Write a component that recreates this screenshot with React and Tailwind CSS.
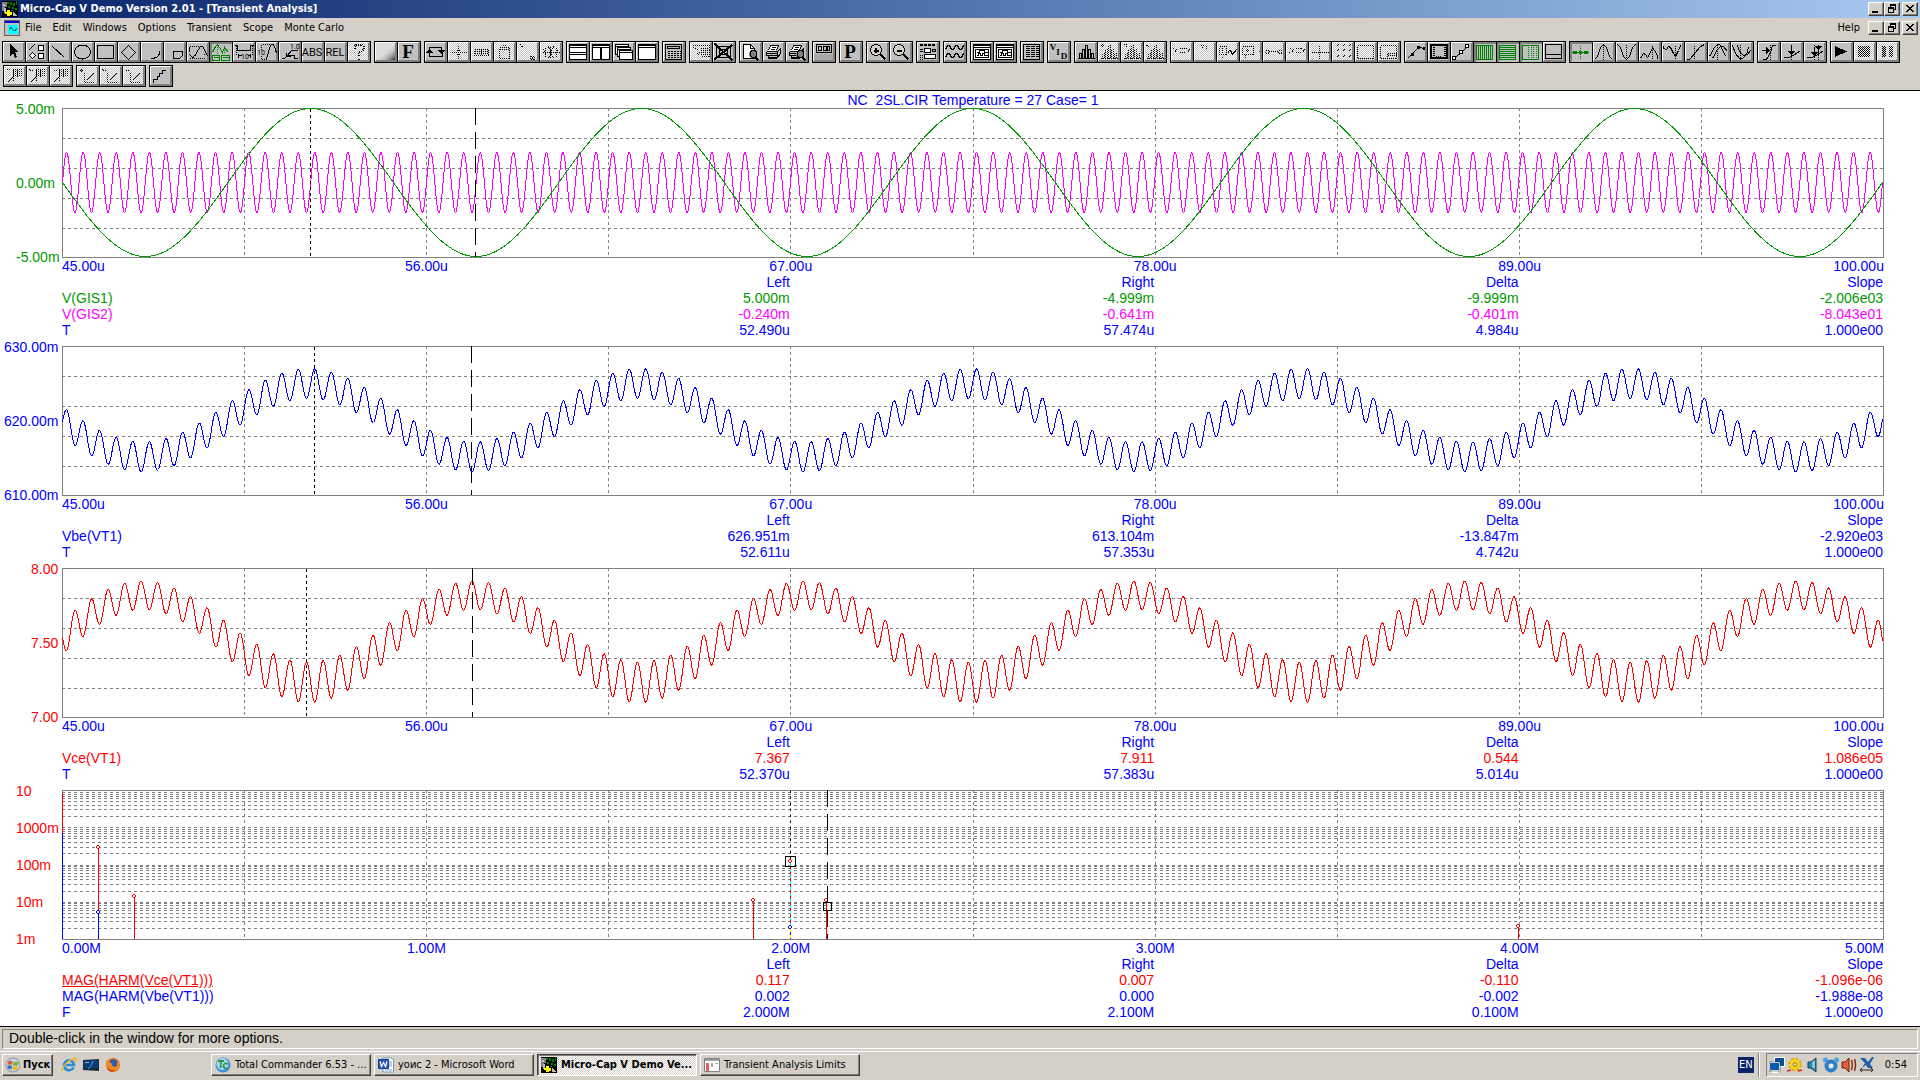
import React from "react";

/* ---------- toolbar glyph helpers (22 x 20 button face) ---------- */
const L = (d, o = {}) => (
  <path d={d} fill="none" stroke="#000" strokeWidth="1" transform="translate(.5 .5)" {...o} />
);
const F = (d, o = {}) => <path d={d} fill="#000" {...o} />;
const T = (x, y, size, s, o = {}) => (
  <text x={x} y={y} fontSize={size} fontFamily="'Liberation Sans Narrow', Roboto, sans-serif" {...o}>{s}</text>
);
const serif = { fontFamily: "'Liberation Serif', serif", fontWeight: 700, textAnchor: "middle" };
const DOT = { strokeDasharray: "1 1" };
const G = { stroke: "#008000" };
const GD = { stroke: "#008000", strokeDasharray: "1 1" };
const W = { fill: "#fff" };

const hist = (o) => L("M2 16H19M4 16V11H6V16M7 16V7H9V16M10 16V3H12V16M13 16V7H15V16M16 16V11H18V16", o);
const win = (
  <>
    {F("M2 2H20V18H2Z", W)}
    {L("M2 2H19V17H2ZM2 5H19M2 3H19")}
  </>
);
const scope = (
  <>
    {F("M2 2H20V18H2Z", W)}
    {L("M2 2H19V17H2ZM2 5H19M2 3H19M4 7H17V15H4ZM5 10H8V8H13V10H16M5 13H7V11H9V13H11V11H13V13H16")}
  </>
);
const lens = (x, y) => (
  <>
    {F(`M${x} ${y}h4l2 2v4l-2 2h-4l-2-2v-4Z`, { fill: "#808080" })}
    {L(`M${x} ${y}h4l1 2v3l-1 2h-4l-1-2v-3Z`)}
    {L(`M${x + 4} ${y + 7}l3 3`, { strokeWidth: 2 })}
  </>
);
const printer = (
  <>
    {F("M7 3H15L13 9H5Z", W)}
    {L("M7 3H15L13 8M7 3L5 8M8 5H12M7 7H11M3 9H14L17 6M3 9V13H14V9M17 6V11L14 15M3 11H14M5 13V16H13L15 13M5 15H13")}
  </>
);
const dither = (x0, x1, y0, y1) => {
  let d = "";
  for (let y = y0; y <= y1; y++) for (let x = x0 + (y % 2); x <= x1; x += 2) d += `M${x} ${y}h1v1h-1Z`;
  return d;
};

const ICONS = {
  arrow: F("M7 2V14L10 11L12 16L14 15L12 10H15Z"),
  shapes: (
    <>
      {L("M2 8L8 2")}
      {F("M3 13L6 10L9 13L6 16Z", W)}
      {L("M3 13L6 10L9 13L6 16Z")}
      {F("M12 3H18V9H12Z", W)}
      {L("M12 3H17V8H12Z")}
      <circle cx="15" cy="14" r="3" fill="#fff" stroke="#000" />
    </>
  ),
  line: L("M3 4L15 15"),
  ellipse: <ellipse cx="10.5" cy="10" rx="8" ry="7" fill="none" stroke="#000" />,
  rect: L("M2 3H18V16H2Z"),
  diamond: L("M10 3L17 10L10 17L3 10Z"),
  arc: L("M18 8V11Q17 16 9 16"),
  pie: L("M9 9H18V12Q17 16 13 16H9Z"),
  wavebox: (
    <>
      {L("M2 4H14M2 16H18M16 12H20", DOT)}
      {L("M2 4V9M2 12L5 15L7 14L11 7L13 4H15L18 9L20 14")}
    </>
  ),
  peaks: (
    <>
      {L("M2 10L5 4L7 2L9 5L12 10L14 5L18 10", G)}
      {L("M7 2V11M14 3V11", GD)}
      {L("M2 13H9V18H2ZM11 13H19V18H11ZM3 15H8M12 15H18", G)}
    </>
  ),
  span: (
    <>
      {L("M3 3V12M19 3V12", DOT)}
      {L("M1 3H4V8H17V3H20M5 11V15M17 11V15M5 13H8M14 13H17")}
      {T(8, 17, 7, "10")}
    </>
  ),
  vspan: (
    <>
      {L("M6 2H16M5 17H11M5 2V7M5 13V17", DOT)}
      {L("M9 17L11 14L13 5L15 2H17L19 7L20 11")}
      {T(1, 13, 7, "10")}
    </>
  ),
  tag: (
    <>
      {T(11, 7, 7, "1.0")}
      {L("M12 8H18M12 8L8 13M2 16H5L8 13H15V16H18M7 10V14H11")}
    </>
  ),
  abs: T(10, 14, 11, "ABS", { textAnchor: "middle" }),
  rel: T(10, 14, 11, "REL", { textAnchor: "middle" }),
  help: L("M6 6V4L8 2H13L15 4V7L10 11V13M10 16V17", { strokeDasharray: "1 1", strokeWidth: 2 }),
  shade: (
    <>
      <defs>
        <linearGradient id="shade" x1="0" y1="0" x2="1" y2="1">
          <stop offset=".4" stopColor="#fff" stopOpacity="0" />
          <stop offset="1" stopColor="#333" />
        </linearGradient>
      </defs>
      {F("M1 1H20V18H1Z", { fill: "#dcdcdc" })}
      {F("M1 1H20V18H1Z", { fill: "url(#shade)" })}
    </>
  ),
  bigF: T(10, 16, 19, "F", serif),
  bigP: T(10, 16, 19, "P", serif),
  swap: (
    <>
      {L("M4 9V5H16V9M4 10V14H17V10")}
      {F("M13 8H20L16.5 12ZM1 11H8L4.5 7Z")}
    </>
  ),
  cross: L("M3 10H18M10 3V17M8 8H12M8 12H12", DOT),
  chip: L("M3 7H17V13H3ZM3 9H17M3 11H17M10 7V13", DOT),
  can: L("M5 5H15V16H5ZM5 7H15M8 3H12", DOT),
  nodes: L("M3 2L5 5M5 3V5M13 14H17V17H13ZM13 14L17 17", DOT),
  burst: L("M2 10H19M5 5V15M8 4L13 16M13 4L8 16M16 5V15M10 4V16M3 7L6 12M15 12L18 7", DOT),
  tileH: <>{win}{L("M2 10H19M2 12H19")}</>,
  tileV: <>{win}{L("M10 5V17M11 5V17")}</>,
  cascade: (
    <>
      {F("M2 2H15V11H2Z", W)}{L("M2 2H15V12H2ZM2 4H15")}
      {F("M4 5H17V14H4Z", W)}{L("M4 5H17V14H4ZM4 7H17")}
      {F("M6 8H20V17H6Z", W)}{L("M6 8H19V17H6ZM6 10H19")}
    </>
  ),
  full: win,
  calc: (
    <>
      {L("M2 2H18V17H2ZM4 4H16V6H4Z")}
      {L("M4 9H17M4 11H17M4 13H17M4 15H17", { strokeDasharray: "2 1" })}
    </>
  ),
  copy: L("M2 3H8M3 5L8 8M6 3H19V8H10M8 10H19V14H10L5 9M10 6H18M10 12H18", DOT),
  nobox: (
    <>
      {L("M3 4H17V15H3ZM6 7H14V12H6Z")}
      {L("M1 1L19 18M19 2L1 17", { strokeWidth: 2 })}
    </>
  ),
  preview: (
    <>
      {F("M3 2H10L15 6V17H3Z", W)}
      {L("M3 2H10L14 6V16H3ZM10 2V6H14")}
      {lens(11, 8)}
    </>
  ),
  printer,
  printview: <>{printer}{lens(12, 8)}</>,
  panel: (
    <>
      {L("M3 2H18V10H3Z")}
      {L("M5 4H8V8H5ZM10 4H13V8H10ZM14 4H16V8H14Z")}
      {F("M1 12H20V18H1Z", { fill: "#a8a8a8" })}
    </>
  ),
  zin: (
    <>
      <circle cx="9" cy="8" r="5.5" fill="#d4d0c8" stroke="#000" />
      {L("M6 8H11M8 5V10", { strokeWidth: 2 })}
      {L("M13 12L18 17", { strokeWidth: 2 })}
    </>
  ),
  zout: (
    <>
      <circle cx="9" cy="8" r="5.5" fill="#d4d0c8" stroke="#000" />
      {L("M6 8H11", { strokeWidth: 2 })}
      {L("M13 12L18 17", { strokeWidth: 2 })}
    </>
  ),
  props: (
    <>
      {L("M2 2H18M2 3H18", { strokeDasharray: "3 1" })}
      {L("M2 7H5M2 9H5M15 7H18V9H15Z")}
      {L("M2 13H5M2 15H5M2 17H5", DOT)}
      {F("M7 6H14V11H7ZM7 12H19V17H7Z", W)}
      {L("M7 6H13V10H7ZM7 12H18V16H7Z")}
    </>
  ),
  waves: L("M1 7L3 3H5L7 7H9L11 3H13L15 7H17L19 3M1 15L3 11H5L7 15H9L11 11H13L15 15H17L19 11"),
  scope,
  sheet: (
    <>
      {L("M2 2H18V17H2Z")}
      {L("M4 4H17M4 6H17M4 8H17M4 10H17M4 12H17M4 14H17", { strokeDasharray: "4 1" })}
    </>
  ),
  vid: (
    <>
      {T(5, 8, 9, "V", serif)}
      {T(10, 13, 9, "I", serif)}
      {T(16, 17, 9, "D", serif)}
    </>
  ),
  hist: hist({}),
  hist1: <>{hist(DOT)}{L("M2 3H6M4 1V5", DOT)}</>,
  hist2: <>{hist(DOT)}{L("M2 2H5V5", DOT)}</>,
  hist3: <>{hist(DOT)}{L("M2 3L6 5", DOT)}</>,
  lab: L("M2 6L4 8L6 6M4 8V10M8 6H13M8 10H13M15 6L17 8L19 6M17 8V10", DOT),
  pair: L("M7 3L9 6M9 3L7 6M12 3V6", DOT),
  boxwave: <>{L("M2 4H9V12H2ZM5 5V10M5 14V16", DOT)}{L("M10 11L12 8H13L15 12L19 7")}</>,
  boxpt: L("M2 4H13V12H2ZM7 6V10M5 8H9M5 12V16M19 8V9", DOT),
  ends: L("M2 8H5V11H2ZM15 8H18V11H15ZM5 9H15", DOT),
  lab2: L("M2 10H3M4 6L6 8L8 6M6 8V10M9 6H14M9 10H14M15 6L17 8L19 6M17 8V10", DOT),
  plus: L("M2 10H19M10 3V17", DOT),
  rain: L("M3 5L6 2M9 5L12 2M15 5L18 2M3 10L6 7M9 10L12 7M15 10L18 7M3 16L6 13M9 16L12 13M15 16L18 13", DOT),
  frame: L("M2 3H18V16H2Z", DOT),
  frame2: L("M2 3H18V16H2ZM9 11H18M9 13H18M9 11V16", DOT),
  curve: <>{L("M2 16L9 9L13 5H16L19 7")}{F("M6 11H9V14H6ZM12 4H15V7H12ZM18 5H20V8H18Z")}</>,
  ruler: (
    <>
      {F("M2 2H20V4H2ZM2 2H4V17H2ZM2 15H20V17H2ZM18 2H20V17H18Z")}
      {L("M4 5H6M4 7H6M4 9H6M4 11H6M4 13H6M15 5H17M15 7H17M15 9H17M15 11H17M15 13H17M8 13V14M10 13V14M12 13V14")}
    </>
  ),
  points: <>{L("M3 16L16 4")}{F("M1 14H5V18H1ZM8 8H12V12H8ZM14 2H18V6H14Z")}{F("M2 15H4V17H2ZM9 9H11V11H9ZM15 3H17V5H15Z", W)}</>,
  vbars: L("M2 3H18V17H2ZM4 3V17M6 3V17M8 3V17M10 3V17M12 3V17M14 3V17M16 3V17", G),
  hbars: L("M2 3H18V17H2ZM2 5H18M2 7H18M2 9H18M2 11H18M2 13H18M2 15H18", G),
  dbars: <>{L("M2 3H18V17H2Z", G)}{L("M8 4V16M11 4V16M13 4V16M16 4V16", GD)}</>,
  pane: L("M2 2H18V16H2ZM2 12H18"),
  track: <>{L("M10 3V17", GD)}{F("M3 9H7V12H3ZM9 9H12V12H9ZM14 9H18V12H14ZM2 10H19V11H2Z", { fill: "#008000" })}</>,
  peak: <>{L("M1 17L4 14L7 5L10 2L13 5L16 14L19 17")}{L("M10 2V17", DOT)}</>,
  valley: <>{L("M1 2L4 5L7 14L10 17L13 14L16 5L19 2")}{L("M10 2V17", DOT)}</>,
  high: <>{L("M1 16L4 11L6 12L8 15L10 12L13 5L15 8L18 13V16")}{L("M13 3V17", DOT)}</>,
  low: <>{L("M1 3V6L4 7L6 4L8 5L11 11L13 14L16 8L18 3")}{L("M13 3V17", DOT)}</>,
  inflect: <>{L("M1 17H4L15 4L19 2")}{L("M9 3V17", DOT)}</>,
  gmax: <>{L("M1 14L6 5L9 2H11L14 7L17 14M4 16L9 7L12 4H15L19 9")}{L("M9 2V17", DOT)}</>,
  gmin: <>{L("M1 3L4 11L8 16H11L15 12L17 5M6 3L8 9L12 13L16 12L19 8")}{L("M9 2V17", DOT)}</>,
  goX: <>{L("M4 17H8L12 10L14 3H17M3 8H9")}{F("M8 5L12 8.5L8 12Z")}{L("M12 2V17", DOT)}</>,
  goY: <>{L("M2 15H7L12 13L19 8M10 2V10")}{F("M7 9H14L10.5 13Z")}{L("M10 2V17", DOT)}</>,
  goXY: <>{L("M2 15H7L12 13L19 8M14 2V10M10 4V12")}{F("M11 4H18L14.5 8ZM7 10H14L10.5 14Z")}{L("M10 2V17M14 2V17", DOT)}</>,
  play: F("M4 4L16 9.5L4 15Z"),
  stop: F(dither(4, 15, 4, 14)),
  pause: F(dither(5, 8, 4, 14) + dither(12, 15, 4, 14)),
  net1: <>{L("M2 3H5M8 3H17M8 5H17M8 7H17M8 9H17M9 3V14M13 3V10", DOT)}{L("M3 16L8 11")}</>,
  net2: <>{L("M2 2V4H5M8 3H17M8 5H17M8 7H17M8 9H17M9 3V14M13 3V10", DOT)}{L("M3 16L8 11")}</>,
  net3: <>{L("M3 4H6M8 3H17M8 5H17M8 7H17M8 9H17M9 3V14M13 3V10", DOT)}{L("M3 16L8 11")}</>,
  ax1: <>{L("M2 4H6M4 2V6M7 6V16H17", DOT)}{L("M9 14L16 7")}</>,
  ax2: <>{L("M2 2V4H5M7 6V16H17", DOT)}{L("M9 14L16 7")}</>,
  ax3: <>{L("M2 4H6M7 6V16H17", DOT)}{L("M9 14L16 7")}</>,
  stairs: L("M3 16V13H7V10H9V7H12V4H15"),
};

/* "-" = unavailable, "+" = pressed */
const ROW1 = [
  "arrow shapes line ellipse rect diamond arc pie wavebox +peaks span vspan tag abs rel -help",
  "shade bigF",
  "swap -cross -chip -can -nodes -burst",
  "tileH tileV cascade full",
  "calc",
  "-copy nobox",
  "preview printer printview",
  "panel",
  "bigP",
  "zin zout",
  "props",
  "waves",
  "scope scope",
  "sheet",
  "vid",
  "hist -hist1 -hist2 -hist3",
  "-lab -pair -boxwave -boxpt -ends -lab2 -plus -rain -frame -frame2",
  "curve ruler points +vbars +hbars +dbars pane",
  "+track peak valley high low inflect gmax gmin",
  "goX goY goXY",
  "play -stop -pause",
];
const ROW2 = ["-net1 -net2 -net3", "-ax1 -ax2 -ax3", "stairs"];

function ToolButton({ code }) {
  const off = code[0] === "-";
  const on = code[0] === "+";
  const name = code.replace(/^[-+]/, "");
  let look = "bg-[#c0c0c0] border-t-white border-l-white border-b-[#808080] border-r-[#808080] border-t border-l border-b-2 border-r-2";
  if (off) look = "bg-[conic-gradient(#fff_25%,#c0c0c0_0_50%,#fff_0_75%,#c0c0c0_0)] bg-[length:2px_2px] border-t-white border-l-white border-b-[#808080] border-r-[#808080] border-t border-l border-b-2 border-r-2";
  if (on) look = "bg-[#c0c0c0] border-t-[#808080] border-l-[#808080] border-t-2 border-l-2";
  return (
    <button type="button" aria-label={name} disabled={off} aria-pressed={on} className="border-r border-black">
      <span className={"relative block h-5 w-[22px] " + look}>
        <svg
          width="22"
          height="20"
          viewBox="0 0 22 20"
          shapeRendering="crispEdges"
          className={on ? "absolute -top-0.5 -left-0.5" : "absolute -top-px -left-px"}
        >
          {ICONS[name]}
        </svg>
      </span>
    </button>
  );
}

function ToolRow({ groups, className }) {
  return (
    <div className={"flex gap-[3px] " + className}>
      {groups.map((g, i) => (
        <div key={i} className="flex shrink-0 border-y border-l border-black">
          {g.split(" ").map((c, j) => (
            <ToolButton key={j} code={c} />
          ))}
        </div>
      ))}
    </div>
  );
}

/* ---------- window furniture ---------- */
const RAISED = "border border-t-white border-l-white border-b-[#404040] border-r-[#404040] shadow-[inset_-1px_-1px_0_#808080] bg-[#d4d0c8]";

function WinButtons() {
  const b = "flex h-3.5 w-4 items-center justify-center " + RAISED;
  return (
    <div className="flex pr-0.5">
      <button type="button" aria-label="Minimize" className={b}>
        <svg width="12" height="10" shapeRendering="crispEdges"><path d="M2 7H8V9H2Z" /></svg>
      </button>
      <button type="button" aria-label="Restore" className={b}>
        <svg width="12" height="10" shapeRendering="crispEdges">
          <path d="M4 0H10V6H8V5H9V2H5V3H4ZM2 3H8V9H2ZM3 5V8H7V5Z" fillRule="evenodd" />
        </svg>
      </button>
      <button type="button" aria-label="Close" className={"ml-0.5 " + b}>
        <svg width="12" height="10" shapeRendering="crispEdges">
          <path d="M2 1H4V2H5V3H7V2H8V1H10V2H9V3H8V4H7V5H8V6H9V7H10V8H8V7H7V6H5V7H4V8H2V7H3V6H4V5H5V4H4V3H3V2H2Z" />
        </svg>
      </button>
    </div>
  );
}

const AppIcon = () => (
  <svg width="16" height="16" viewBox="0 0 16 16" shapeRendering="crispEdges" className="shrink-0">
    <path d="M0 0H16V16H0Z" fill="#000" />
    <path d="M0 1H5V6H3V10H0Z" fill="#808080" />
    <path d="M1 3H3V5H1ZM2 7H4V12H2Z" fill="#c0c0c0" />
    <path d="M5 1H7V3H5ZM8 1H10V4H8ZM11 2H13V5H11ZM14 0H15V4H14ZM6 5H8V7H6ZM10 6H12V8H10ZM13 7H15V9H13ZM9 9H11V10H9Z" fill="#008000" />
    <path d="M5 9H8V11H10V14H8V15H5V13H3V11H5Z" fill="#ff0" />
    <path d="M11 11L15 15H11Z" fill="#c0c0c0" />
  </svg>
);

/* ---------- plots ---------- */
const PX = 1820 / 55;
const wave = (fn) => {
  let d = "";
  for (let i = 0; i <= 3640; i++) {
    const t = (i / 2) / PX;
    d += (i ? "L" : "M") + (i / 2 + 0.5).toFixed(1) + " " + fn(t).toFixed(2);
  }
  return d;
};
const slow = (t, ph = 0) => Math.sin((2 * Math.PI * (t + ph)) / 10);
const fast = (t) => Math.sin(4 * Math.PI * t);

const GIS1 = wave((t) => 74.5 + 74 * slow(t));
const GIS2 = wave((t) => 74.5 - 30 * fast(t));
const VBE = wave((t) => 149 * ((630 - (620.03 - 4.93 * slow(t, 0.07) + 2 * fast(t))) / 20));
const VCE = wave((t) => 149 * (8 - (7.525 + 0.2925 * slow(t, 0.07) - (0.115 - 0.02 * slow(t)) * fast(t))));

const LINEAR = [30, 60, 90, 120];
const LOG = [];
for (let k = 0; k < 4; k++) for (let m = 1; m < 10; m++) LOG.push(Math.round(37.25 * (4 - k - Math.log10(m))));

function Plot({ rows, left, right, children, label }) {
  const vs = [1, 2, 3, 4, 5, 6, 7, 8, 9];
  return (
    <svg
      role="img"
      aria-label={label}
      viewBox="0 0 1822 150"
      preserveAspectRatio="none"
      shapeRendering="crispEdges"
      fill="none"
      className="block h-[150px] w-full"
    >
      <g stroke="#808080" strokeDasharray="3 3">
        {rows.map((y) => <path key={y} d={`M0 ${y + 0.5}H1821`} />)}
        {vs.map((v) => <path key={v} d={`M${Math.floor(v * 182.2) + 0.5} 0V150`} />)}
      </g>
      <path d="M.5 .5H1821.5V149.5H.5Z" stroke="#808080" />
      {children}
      <path d={`M${left + 0.5} 1V149`} stroke="#000" strokeDasharray="3 3" />
      <path d={`M${right + 0.5} 0V149`} stroke="#000" strokeDasharray="17 7" />
    </svg>
  );
}

const C = { g: "text-[#009900]", m: "text-[#ff00ff]", b: "text-[#0000ff]", r: "text-[#ff0000]" };

function Panel({ y, yClass, x, legend, className, children }) {
  return (
    <section className={"flex " + className}>
      <div className={"-mt-[7px] flex h-[164px] w-[62px] shrink-0 flex-col justify-between whitespace-nowrap " + yClass}>
        {y.map((s) => <span key={s}>{s}</span>)}
      </div>
      <div className="min-w-0 flex-1">
        {children}
        <div className={"flex " + C.b}>
          <span className="w-1/10">{x[0]}</span>
          {x.slice(1, 5).map((s) => <span key={s} className="w-1/5 text-center">{s}</span>)}
          <span className="w-1/10 text-right">{x[5]}</span>
        </div>
        <table className="w-full table-fixed border-collapse text-right">
          <thead className={C.b}>
            <tr>
              <td className="p-0" />
              {["Left", "Right", "Delta", "Slope"].map((h) => (
                <th key={h} scope="col" className="p-0 pr-px text-right font-normal">{h}</th>
              ))}
            </tr>
          </thead>
          <tbody>
            {legend.map(([c, name, ...v]) => (
              <tr key={name} className={C[c]}>
                <th scope="row" className="p-0 text-left font-normal">
                  <span className={name.includes("Vce(VT1)))") ? "underline" : ""}>{name}</span>
                </th>
                {v.map((s, i) => <td key={i} className="p-0 pr-px">{s}</td>)}
              </tr>
            ))}
          </tbody>
        </table>
      </div>
    </section>
  );
}

const TIMES = ["45.00u", "56.00u", "67.00u", "78.00u", "89.00u", "100.00u"];

function Stem({ x, y, color }) {
  return (
    <g>
      <path d={`M${x + 0.5} ${y + 2}V149`} stroke={color} />
      <path d={`M${x - 1} ${y - 1}h2v2h-2Z`} fill="#fff" />
      <path
        d={`M${x - 1} ${y - 2}h2v1h-2ZM${x - 1} ${y + 1}h2v1h-2ZM${x - 2} ${y - 1}h1v2h-1ZM${x + 1} ${y - 1}h1v2h-1Z`}
        fill={color}
      />
    </g>
  );
}

/* ---------- task bar ---------- */
function Task({ icon, active, children }) {
  const look = active
    ? "border border-t-[#404040] border-l-[#404040] border-b-white border-r-white shadow-[inset_1px_1px_0_#808080] bg-[conic-gradient(#fff_25%,#d4d0c8_0_50%,#fff_0_75%,#d4d0c8_0)] bg-[length:2px_2px] font-bold"
    : RAISED;
  return (
    <button type="button" className={"flex h-[22px] w-40 items-center gap-1 px-[3px] text-left " + look}>
      {icon}
      <span className="whitespace-nowrap">{children}</span>
    </button>
  );
}

const S = ({ children }) => <svg width="16" height="16" viewBox="0 0 16 16" className="shrink-0">{children}</svg>;

const Flag = (
  <S>
    <circle cx="8" cy="8" r="7.5" fill="#8d9aa8" />
    <circle cx="8" cy="8" r="6.5" fill="#c9d3dc" />
    <path d="M3 5Q5 3 7.500 4.500L7 8Q5 6.500 2.500 8Z" fill="#e8542a" />
    <path d="M8.500 4.500Q11 6 13.500 4.500L13 8Q10.500 9 8 8Z" fill="#6fb52c" />
    <path d="M2.500 9Q5 7.500 7 9L6.500 12.500Q4.500 11 3 12Z" fill="#2b6fd0" />
    <path d="M8 9Q10.500 10 13 9L12 12.500Q10 13.500 7.500 12.500Z" fill="#f5b915" />
  </S>
);
const IE = (
  <S>
    <path d="M12.500 10.500A5 5 0 1 1 13 8H5" fill="none" stroke="#2a8be0" strokeWidth="2.600" />
    <path d="M1.500 14.500C-.5 11 8 2 14 1.500C15.500 2 15 4 14 5" fill="none" stroke="#f3b51c" strokeWidth="1.400" />
  </S>
);
const Desk = (
  <S>
    <path d="M0 3L16 2V14L0 13Z" fill="#1c2a3c" />
    <path d="M1 4L15 3V11L1 12Z" fill="#0d3d72" />
    <path d="M5 12Q9 9 10 4" stroke="#4aa3e8" fill="none" />
    <path d="M2 5H6V6H2Z" fill="#7fb4e0" />
  </S>
);
const Fox = (
  <S>
    <circle cx="8" cy="8" r="7" fill="#e66a1c" />
    <circle cx="8.500" cy="6.500" r="4" fill="#2b5fb0" />
    <path d="M1 5Q2 2 4 3Q4 6 7 6.500Q6 9 10 10Q13 9 12 4Q16 7 14 11Q11 15.500 6 14.500Q0 12 1 5Z" fill="#f08a1e" />
    <path d="M2 10Q5 14 11 13Q6 16 3 13Z" fill="#c43c12" />
  </S>
);
const TC = (
  <S>
    <circle cx="8" cy="8" r="7.500" fill="#3c8fd6" />
    <circle cx="7.500" cy="7" r="6" fill="#a8d4f2" />
    <path d="M3 4H9M6 4L5.500 11" stroke="#2d9a45" strokeWidth="1.800" fill="none" />
    <path d="M13 7Q9 5 8.500 9Q9 12.500 12 11" stroke="#2d9a45" strokeWidth="1.800" fill="none" />
  </S>
);
const Word = (
  <S>
    <path d="M5 1H14L15.500 3V15H5Z" fill="#fff" stroke="#7a96c8" />
    <path d="M11 5H14M11 7H14M11 9H14M7 13H14" stroke="#7a96c8" />
    <path d="M.5 2.500H10.500V11.500H.5Z" fill="#2c5db3" stroke="#173f8a" />
    <path d="M2 4.500L3.500 9.500L5.500 5.500L7.500 9.500L9 4.500" fill="none" stroke="#fff" strokeWidth="1.200" />
  </S>
);
const Limits = (
  <S>
    <path d="M.5 1.500H15.500V14.500H.5Z" fill="#fff" stroke="#808080" />
    <path d="M1 2H15V4H1Z" fill="#a0a0a0" />
    <path d="M2 6H5V14H2Z" fill="#e06060" />
    <path d="M7 6H9V10H7ZM11 6H14V7H11Z" fill="#a8a8a8" />
  </S>
);
const TRAY = [
  <S key="n">
    <path d="M5.500 .5H15.500V9.500H5.500Z" fill="#0a4f9a" stroke="#fff" />
    <path d="M.5 5.500H10.500V13.500H.5Z" fill="#0a5aae" stroke="#fff" />
    <path d="M3 15H9" stroke="#fff" strokeWidth="2" />
    <path d="M0 5H11V14H0Z" fill="none" stroke="#333" strokeWidth=".5" />
  </S>,
  <S key="g">
    <circle cx="8" cy="7.500" r="5.500" fill="#f6c90e" stroke="#e0a800" strokeWidth="2.500" strokeDasharray="2.500 1.800" />
    <circle cx="8" cy="7.500" r="5" fill="#fbd51a" />
    <circle cx="8" cy="7.500" r="2" fill="#d4d0c8" stroke="#a87d00" />
    <path d="M0 14L4 13M11 14L15 13" stroke="#e02020" strokeWidth="1.500" />
  </S>,
  <S key="v">
    <path d="M3 5H6L11 1V15L6 11H3Z" fill="#2a86b0" stroke="#173c50" />
    <path d="M7 5L10 3V12L7 10Z" fill="#7cc6e4" />
  </S>,
  <S key="b">
    <circle cx="8" cy="9" r="4.500" fill="#e4ecf4" stroke="#2e7fc4" strokeWidth="4" />
    <circle cx="2.500" cy="3" r="2.500" fill="#4aa0dc" />
    <circle cx="13.500" cy="3" r="2.500" fill="#4aa0dc" />
  </S>,
  <S key="s">
    <path d="M1 5H4L8 1V15L4 11H1Z" fill="#e2603a" stroke="#6b1d0c" />
    <path d="M10.500 3Q12 8 10.500 13M13.500 2Q15.500 8 13.500 14" stroke="#8c2a16" fill="none" strokeWidth="1.500" />
  </S>,
  <S key="x">
    <path d="M1 1H6L9 5L13 0H15L11 7L14 11H9L7 8L3 11L6 6Z" fill="#1c5fa8" />
    <path d="M1 13H14M3 11L1 13L3 15M12 11L14 13L12 15" stroke="#222" fill="none" />
  </S>,
];

export default function App() {
  return (
    <div className="flex min-h-screen flex-col bg-[#d4d0c8] font-['Tahoma','DejaVu_Sans_Condensed','DejaVu_Sans',sans-serif] text-[11px] leading-4 text-black">
      <header className="flex h-[18px] items-center bg-linear-to-r from-[#0a246a] to-[#a6caf0] pl-0.5">
        <AppIcon />
        <h1 className="ml-0.5 flex-1 text-[11px] font-bold whitespace-nowrap text-white">
          Micro-Cap V Demo Version 2.01 - [Transient Analysis]
        </h1>
        <WinButtons />
      </header>

      <nav className="flex h-5 items-center pl-1">
        <svg width="16" height="16" shapeRendering="crispEdges" className="mr-[5px] shrink-0">
          <path d="M0 0H16V16H0Z" fill="#606060" />
          <path d="M1 1H15V3H1Z" fill="#0000e0" />
          <path d="M1 3H15V15H1Z" fill="#c0c0c0" />
          <path d="M4 5H14V14H4Z" fill="#00ffff" />
          <path d="M5 10L7 7L9 10L11 11L13 8" fill="none" stroke="#008080" />
        </svg>
        <div className="flex flex-1 gap-[11px]">
          {["File", "Edit", "Windows", "Options", "Transient", "Scope", "Monte Carlo"].map((m) => (
            <button key={m} type="button">{m}</button>
          ))}
        </div>
        <button type="button" className="mr-2">Help</button>
        <WinButtons />
      </nav>

      <div className="border-b border-black pt-[3px] pb-[3px]">
        <ToolRow groups={ROW1} className="pl-0.5" />
        <ToolRow groups={ROW2} className="mt-0.5 pl-[3px]" />
      </div>

      <main className="flex-1 bg-white pr-9 font-['Liberation_Sans',Arial,sans-serif] text-[14px] leading-4">
        <h2 className={"h-[17px] pt-px pl-[62px] text-center whitespace-pre " + C.b}>
          NC  2SL.CIR Temperature = 27 Case= 1
        </h2>

        <Panel
          className="mb-2"
          y={["5.00m", "0.00m", "-5.00m"]}
          yClass={"pl-4 " + C.g}
          x={TIMES}
          legend={[
            ["g", "V(GIS1)", "5.000m", "-4.999m", "-9.999m", "-2.006e03"],
            ["m", "V(GIS2)", "-0.240m", "-0.641m", "-0.401m", "-8.043e01"],
            ["b", "T", "52.490u", "57.474u", "4.984u", "1.000e00"],
          ]}
        >
          <Plot rows={LINEAR} left={248} right={413} label="V(GIS1), V(GIS2)">
            <path d={GIS2} stroke="#ff00ff" />
            <path d={GIS1} stroke="#009900" />
          </Plot>
        </Panel>

        <Panel
          className="mb-2"
          y={["630.00m", "620.00m", "610.00m"]}
          yClass={"pl-1 " + C.b}
          x={TIMES}
          legend={[
            ["b", "Vbe(VT1)", "626.951m", "613.104m", "-13.847m", "-2.920e03"],
            ["b", "T", "52.611u", "57.353u", "4.742u", "1.000e00"],
          ]}
        >
          <Plot rows={LINEAR} left={252} right={409} label="Vbe(VT1)">
            <path d={VBE} stroke="#0000ff" />
          </Plot>
        </Panel>

        <Panel
          className="mb-2"
          y={["8.00", "7.50", "7.00"]}
          yClass={"pl-[31px] " + C.r}
          x={TIMES}
          legend={[
            ["r", "Vce(VT1)", "7.367", "7.911", "0.544", "1.086e05"],
            ["b", "T", "52.370u", "57.383u", "5.014u", "1.000e00"],
          ]}
        >
          <Plot rows={LINEAR} left={244} right={410} label="Vce(VT1)">
            <path d={VCE} stroke="#ff0000" />
          </Plot>
        </Panel>

        <Panel
          className=""
          y={["10", "1000m", "100m", "10m", "1m"]}
          yClass={"pl-4 " + C.r}
          x={["0.00M", "1.00M", "2.00M", "3.00M", "4.00M", "5.00M"]}
          legend={[
            ["r", "MAG(HARM(Vce(VT1)))", "0.117", "0.007", "-0.110", "-1.096e-06"],
            ["b", "MAG(HARM(Vbe(VT1)))", "0.002", "0.000", "-0.002", "-1.988e-08"],
            ["b", "F", "2.000M", "2.100M", "0.100M", "1.000e00"],
          ]}
        >
          <Plot rows={LOG} left={-9} right={765} label="Harmonics">
            <path d="M.5 3V43" stroke="#f00" />
            <path d="M.5 43V149" stroke="#00f" />
            <Stem x={36} y={57} color="#f00" />
            <Stem x={36} y={122} color="#00f" />
            <Stem x={72} y={106} color="#f00" />
            <Stem x={691} y={110} color="#f00" />
            <path d="M728.5 1V70" stroke="#000" strokeDasharray="2 4" />
            <Stem x={728} y={71} color="#f00" />
            <path d="M728.5 73V135" stroke="#0ff" strokeDasharray="3 3" />
            <Stem x={728} y={137} color="#00f" />
            <path d="M728.5 139V149" stroke="#ff0" strokeDasharray="3 3" />
            <path d="M723.5 66.500H733.500V76.500H723.500Z" stroke="#000" />
            <Stem x={764} y={110} color="#f00" />
            <path d="M761.5 112.500H769.500V120.500H761.500Z" stroke="#000" />
            <Stem x={1456} y={136} color="#f00" />
          </Plot>
        </Panel>
      </main>

      <footer className="border-t border-black">
        <div className="mx-0.5 mt-0.5 h-5 border border-t-[#808080] border-l-[#808080] border-b-white border-r-white pl-1.5 font-['Liberation_Sans',Arial,sans-serif] text-[14px] leading-4">
          Double-click in the window for more options.
        </div>
        <div className="mt-0.5 flex h-[29px] items-center border-t border-white px-0.5 pb-0.5">
          <button type="button" className={"flex h-[22px] w-[51px] items-center gap-0.5 pl-0.5 font-bold " + RAISED}>
            {Flag}
            Пуск
          </button>
          <div className="ml-2 flex w-[150px] gap-1.5">
            {[IE, Desk, Fox].map((ic, i) => (
              <button key={i} type="button" aria-label={["Internet Explorer", "Desktop", "Firefox"][i]}>{ic}</button>
            ))}
          </div>
          <div className="flex flex-1 gap-[3px]">
            <Task icon={TC}>Total Commander 6.53 - ...</Task>
            <Task icon={Word}>уоис 2 - Microsoft Word</Task>
            <Task icon={<AppIcon />} active>Micro-Cap V Demo Ve...</Task>
            <Task icon={Limits}>Transient Analysis Limits</Task>
          </div>
          <span className="flex h-4 w-4 items-center justify-center bg-[#0a246a] text-[11px] text-white">EN</span>
          <span className="ml-1 h-6 w-0.5 border-r border-l border-r-white border-l-[#808080]" />
          <div className="ml-1.5 flex h-6 items-center gap-0.5 border border-t-[#808080] border-l-[#808080] border-b-white border-r-white pr-2.5 pl-0.5">
            {TRAY}
            <time className="ml-2">0:54</time>
          </div>
        </div>
      </footer>
    </div>
  );
}
